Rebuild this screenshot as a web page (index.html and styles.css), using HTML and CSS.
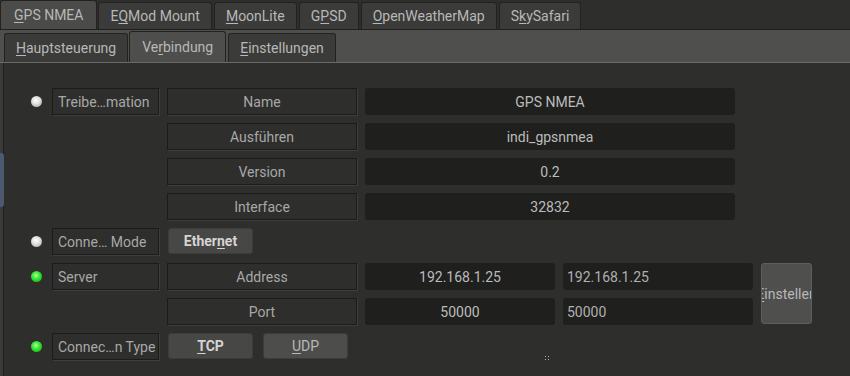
FILE: index.html
```html
<!doctype html>
<html lang="de">
<head>
    <meta charset="UTF-8">
    <title>INDI Control Panel - GPS NMEA</title>
    <link rel="stylesheet" href="styles.css">
</head>
<body>
    <div class="window">
        <div class="tabs outer">
            <div class="tab active"><u>G</u>PS NMEA</div>
            <div class="tab">E<u>Q</u>Mod Mount</div>
            <div class="tab"><u>M</u>oonLite</div>
            <div class="tab">G<u>P</u>SD</div>
            <div class="tab"><u>O</u>penWeatherMap</div>
            <div class="tab">S<u>k</u>ySafari</div>
        </div>

        <div class="pane">
            <div class="tabs inner">
                <div class="tab"><u>H</u>auptsteuerung</div>
                <div class="tab active">Ve<u>r</u>bindung</div>
                <div class="tab"><u>E</u>instellungen</div>
            </div>

            <div class="page">
                <div class="props">
                    <!-- driver info -->
                    <span class="led"></span>
                    <div class="label">Treibe…mation</div>
                    <div class="name">Name</div>
                    <div class="value wide">GPS NMEA</div>

                    <span class="skip"></span>
                    <div class="name">Ausführen</div>
                    <div class="value wide">indi_gpsnmea</div>

                    <span class="skip"></span>
                    <div class="name">Version</div>
                    <div class="value wide">0.2</div>

                    <span class="skip"></span>
                    <div class="name">Interface</div>
                    <div class="value wide">32832</div>

                    <!-- connection mode -->
                    <span class="led"></span>
                    <div class="label">Conne… Mode</div>
                    <div class="buttons">
                        <button class="btn on">Ether<u>n</u>et</button>
                    </div>

                    <!-- server -->
                    <span class="led ok"></span>
                    <div class="label">Server</div>
                    <div class="name">Address</div>
                    <div class="value">192.168.1.25</div>
                    <div class="value input">192.168.1.25</div>
                    <button class="btn set"><span><u>E</u>instellen</span></button>

                    <span class="skip"></span>
                    <div class="name">Port</div>
                    <div class="value">50000</div>
                    <div class="value input">50000</div>

                    <!-- connection type -->
                    <span class="led ok"></span>
                    <div class="label">Connec…n Type</div>
                    <div class="buttons">
                        <button class="btn on"><u>T</u>CP</button>
                        <button class="btn"><u>U</u>DP</button>
                    </div>
                </div>
            </div>
        </div>

        <div class="handle"></div>
        <div class="grip"></div>
    </div>
</body>
</html>
```

FILE: styles.css
```css
body {
    margin: 0;
    background: #2e2e2c;
    font-family: Roboto, "Noto Sans", sans-serif;
    font-size: 14px;
    color: #bcbcbc;
}
.window {
    position: relative;
    width: 850px;
    height: 376px;
    overflow: hidden;
}
u {
    text-decoration-thickness: 1px;
    text-underline-offset: 2px;
}

/* tabs */
.tabs {
    display: flex;
    align-items: flex-end;
    gap: 2px;
}
.outer {
    height: 29px;
}
.tab {
    box-sizing: border-box;
    height: 27px;
    padding: 0 11px;
    display: flex;
    align-items: center;
    background: #3b3b39;
    border: 1px solid #222220;
    border-bottom: none;
    border-radius: 3px 3px 0 0;
    color: #b8b8b8;
}
.tab.active {
    height: 29px;
    padding: 0 13px;
    background: #4b4b49;
}
.outer .tab.active {
    margin-right: -1px;
}
.pane {
    background: #3a3a38;
    border-top: 1px solid #1f1f1e;
}
.inner {
    height: 32px;
    padding-left: 4px;
    gap: 1px;
    background: #4f4f4d;
    border-bottom: 1px solid #6a6a68;
}
.inner .tab {
    height: 29px;
    padding: 0 11px;
}
.inner .tab.active {
    height: 31px;
    padding: 0 12px;
    margin-right: 1px;
    background: #4e4e4c;
}
.page {
    height: 313px;
    margin-left: 3px;
    padding: 25px 0 0 24px;
    border-left: 1px solid #1f1f1e;
    background: #2e2e2c;
}

/* property grid */
.props {
    display: grid;
    grid-template-columns: 16px 107px 190px 190px 190px 51px;
    grid-auto-rows: 27px;
    gap: 8px;
}
.skip {
    grid-column: 1 / span 2;
}
.led {
    grid-column: 1;
    align-self: center;
    justify-self: center;
    width: 11px;
    height: 11px;
    border-radius: 50%;
    background: radial-gradient(circle at 45% 40%, #ffffff 0%, #e2e2e2 40%, #9a9a9a 100%);
}
.led.ok {
    background: radial-gradient(circle at 45% 40%, #a8ff98 0%, #2fe42f 45%, #1a9a1a 100%);
}
.label, .name {
    box-sizing: border-box;
    display: flex;
    align-items: center;
    border: 1px solid #1b1b1a;
    box-shadow: 1px 1px 0 #3e3e3c;
    color: #a8a8a8;
    white-space: nowrap;
    overflow: hidden;
}
.label {
    grid-column: 2;
    padding-left: 5px;
}
.name {
    justify-content: center;
}
.value {
    display: flex;
    align-items: center;
    justify-content: center;
    background: #1f1f1e;
    border-radius: 3px;
    color: #bcbcbc;
}
.value.wide {
    grid-column: 4 / span 2;
    width: 370px;
}
.value.input {
    justify-content: flex-start;
    padding-left: 4px;
    color: #b0b0b0;
}
.buttons {
    grid-column: 3;
    display: flex;
    gap: 10px;
    padding-left: 1px;
}
.btn {
    box-sizing: border-box;
    width: 85px;
    height: 26px;
    padding: 0;
    background: #4d4d4b;
    border: 1px solid #3c3c3a;
    border-radius: 3px;
    font: inherit;
    color: #b8b8b8;
}
.btn.on {
    background: #474745;
    font-weight: bold;
    color: #d4d4d4;
}
.btn.set {
    grid-row: span 2;
    width: 51px;
    height: 61px;
    display: flex;
    align-items: center;
    justify-content: center;
    overflow: hidden;
    background: #4f4f4d;
    border-color: #5e5e5c;
    color: #b8b8b8;
}

/* window bits */
.handle {
    position: absolute;
    left: 0;
    top: 153px;
    width: 4px;
    height: 54px;
    background: #4b5a70;
    border-radius: 0 3px 3px 0;
}
.grip {
    position: absolute;
    left: 544px;
    top: 355px;
    width: 5px;
    height: 5px;
    background:
        radial-gradient(circle, #b0b0b0 0.7px, transparent 0.8px) 0 0 / 3px 3px;
}
```
